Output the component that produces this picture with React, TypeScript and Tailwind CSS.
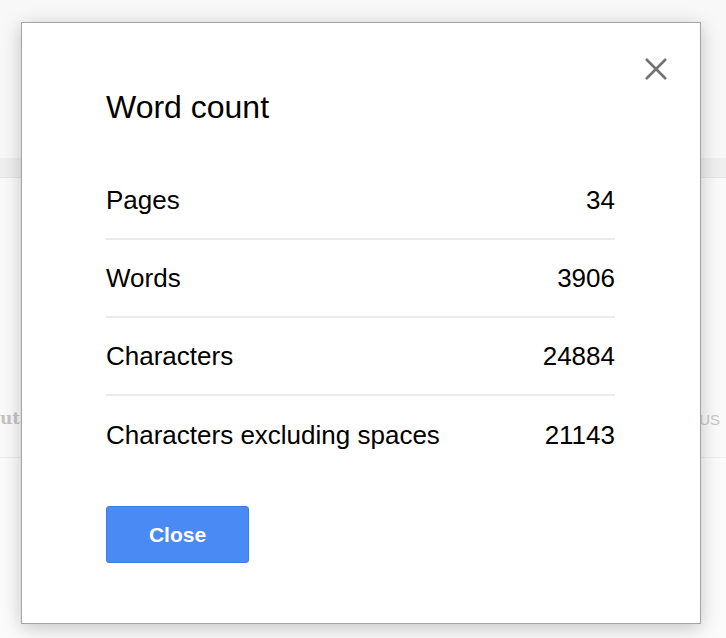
import React from "react";

const rows: [string, string][] = [
  ["Pages", "34"],
  ["Words", "3906"],
  ["Characters", "24884"],
  ["Characters excluding spaces", "21143"],
];

export default function App() {
  return (
    <div
      className="relative w-[726px] h-[638px] overflow-hidden bg-[#fbfbfb]"
      style={{ fontFamily: '"Liberation Sans", Arial, sans-serif' }}
    >
      {/* background page */}
      <div className="flex flex-col">
        <div className="h-[158px] bg-[#f8f8f8]" />
        <div className="h-[20px] bg-[#efefef] border-b border-[#e6e6e6]" />
        <div className="h-[280px] bg-[#fafafa] border-b border-[#ededed] flex items-end justify-between pb-[30px]">
          <span className="text-[17px] font-bold text-[#c4c4c4] ml-0 leading-none" style={{ fontFamily: '"DejaVu Serif", serif' }}>ut</span>
          <span className="text-[15px] text-[#c8c8c8] mr-[6px] leading-none">US</span>
        </div>
        <div className="flex-1 bg-[#fcfcfc]" />
      </div>

      {/* dialog */}
      <div className="absolute left-[21px] top-[22px] w-[680px] h-[602px] bg-white border border-[#a3a3a3] shadow-[0_4px_18px_rgba(0,0,0,0.22)] pl-[84px] pr-[85px] pt-[68px]">
        <button className="absolute right-[33px] top-[35px] w-[22px] h-[22px] flex items-center justify-center">
          <svg width="22" height="22" viewBox="0 0 22 22">
            <path d="M1 1 L21 21 M21 1 L1 21" stroke="#737373" strokeWidth="2.6" fill="none" />
          </svg>
        </button>
        <h1 className="text-[32px] leading-[32px] text-black font-normal">Word count</h1>
        <div className="mt-[39px] flex flex-col">
          {rows.map(([label, value], i) => (
            <div
              key={label}
              className={
                i < rows.length - 1
                  ? "h-[78px] flex items-center justify-between border-b-2 border-[#ebebeb] text-[26px] leading-[26px] text-black"
                  : "h-[78px] flex items-center justify-between text-[26px] leading-[26px] text-black"
              }
            >
              <span>{label}</span>
              <span>{value}</span>
            </div>
          ))}
        </div>
        <button className="mt-[32px] w-[143px] h-[57px] rounded-[3px] bg-[#4a8af4] border border-[#3d7ce6] text-white font-bold text-[21px] leading-none flex items-center justify-center">
          Close
        </button>
      </div>
    </div>
  );
}
